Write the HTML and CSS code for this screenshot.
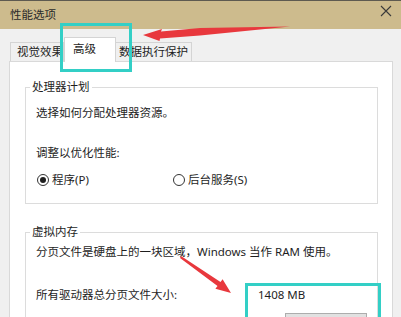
FILE: index.html
```html
<!DOCTYPE html>
<html lang="zh-CN">
<head>
<meta charset="utf-8">
<title>性能选项</title>
<link rel="stylesheet" href="styles.css">
</head>
<body>
<div class="window">
  <div class="titlebar">
    <span class="title">性能选项</span>
    <svg class="close" width="12" height="12" viewBox="0 0 12 12"><path d="M1 1 L11 11 M11 1 L1 11" stroke="#3a3a3a" stroke-width="1.1" fill="none"/></svg>
  </div>
  <div class="body">
    <div class="tabs">
      <div class="tab tab1">视觉效果</div>
      <div class="tab tab2 active">高级</div>
      <div class="tab tab3">数据执行保护</div>
    </div>
    <div class="panel">
      <fieldset class="group g1">
        <legend>处理器计划</legend>
        <p class="p1">选择如何分配处理器资源。</p>
        <p class="p2">调整以优化性能:</p>
        <div class="radios">
          <div class="radio"><span class="circle checked"></span><span>程序(P)</span></div>
          <div class="radio"><span class="circle"></span><span>后台服务(S)</span></div>
        </div>
      </fieldset>
      <fieldset class="group g2">
        <legend>虚拟内存</legend>
        <p class="p1">分页文件是硬盘上的一块区域，Windows 当作 RAM 使用。</p>
        <div class="size-row"><span>所有驱动器总分页文件大小:</span><span class="size">1408 MB</span></div>
        <div class="btn-row"><div class="btn"></div></div>
      </fieldset>
    </div>
  </div>
  <svg class="annot" width="401" height="317" viewBox="0 0 401 317">
    <rect x="61.5" y="24.5" width="69" height="46" fill="none" stroke="#33cfc6" stroke-width="3"/>
    <rect x="246.5" y="284.5" width="133" height="60" fill="none" stroke="#33cfc6" stroke-width="3"/>
    <polygon points="143,35 162,29 161,31.5 200,28 290,26.5 200,35.5 160,38.5 159.5,41" fill="#e8383d"/>
    <polygon points="181,256 220.5,282 222.6,279.2 231,293 215.4,288.8 217.5,286 180,258" fill="#e8383d"/>
  </svg>
</div>
</body>
</html>
```

FILE: styles.css
```css
html, body {
  margin: 0;
  padding: 0;
}
body {
  width: 401px;
  height: 317px;
  overflow: hidden;
  font-family: "Noto Sans", "Noto Sans CJK SC", sans-serif;
  font-size: 11.5px;
  color: #1e1e1e;
}
.window {
  position: relative;
  width: 401px;
  height: 317px;
  background: #f0f0f0;
  overflow: hidden;
}
.titlebar {
  box-sizing: border-box;
  height: 29px;
  border-top: 1px solid #5e5a50;
  background: #cdbb8d;
  display: flex;
  align-items: center;
  padding-left: 10px;
}
.title {
  color: #2a2a2a;
  line-height: 14px;
}
.close {
  margin-left: auto;
  margin-right: 9px;
  align-self: flex-start;
  margin-top: 4px;
}
.body {
  padding: 0 8px 0 9px;
}
.tabs {
  height: 32px;
  display: flex;
  align-items: flex-end;
  padding-left: 1px;
}
.tab {
  box-sizing: border-box;
  height: 19px;
  border: 1px solid #d4d4d4;
  border-bottom: none;
  background: #f0f0f0;
  display: flex;
  align-items: center;
  line-height: 14px;
}
.tab1 {
  width: 54px;
  padding-left: 6px;
}
.tab2 {
  width: 52px;
  padding-left: 8px;
}
.tab3 {
  width: 76px;
  padding-left: 3px;
  border-left: none;
}
.tab.active {
  height: 25px;
  background: #fff;
  margin-bottom: -1px;
  position: relative;
  z-index: 1;
  padding-bottom: 3px;
}
.panel {
  background: #fff;
  border: 1px solid #d9d9d9;
  height: 270px;
  display: flow-root;
}
.group {
  border: 1px solid #dcdcdc;
  margin: 0 14px 0 15px;
  padding: 0 10px 15px;
}
.group legend {
  line-height: 14px;
  padding: 0 2px;
  margin-left: -6px;
}
.g1 {
  margin-top: 18px;
}
.g2 {
  margin-top: 21px;
}
.group p {
  margin: 0;
  line-height: 16px;
}
.g1 .p1 {
  margin-top: 11px;
}
.g1 .p2 {
  margin-top: 24px;
}
.radios {
  margin-top: 11px;
  display: grid;
  grid-template-columns: 136px auto;
  padding-left: 1px;
  line-height: 16px;
}
.radio {
  display: flex;
  align-items: center;
  gap: 3px;
}
.circle {
  box-sizing: border-box;
  width: 12px;
  height: 12px;
  border: 1px solid #333;
  border-radius: 50%;
  display: flex;
  align-items: center;
  justify-content: center;
}
.circle.checked::after {
  content: "";
  width: 6px;
  height: 6px;
  border-radius: 50%;
  background: #1e1e1e;
}
.g2 .p1 {
  margin-top: 5px;
}
.size-row {
  margin-top: 27px;
  display: grid;
  grid-template-columns: 222px auto;
  line-height: 16px;
}
.btn-row {
  margin-top: 10px;
}
.btn {
  box-sizing: border-box;
  margin-left: 249px;
  width: 82px;
  height: 23px;
  border: 1px solid #adadad;
  background: #e1e1e1;
}
.annot {
  position: absolute;
  left: 0;
  top: 0;
  pointer-events: none;
}
```
